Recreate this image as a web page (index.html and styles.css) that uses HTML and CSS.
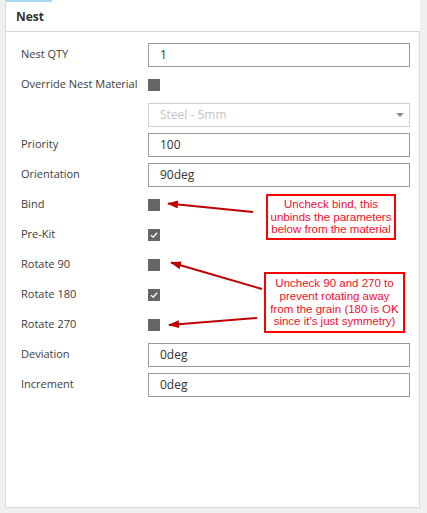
FILE: index.html
```html
<!DOCTYPE html>
<html lang="en">

<head>
  <meta charset="UTF-8" />
  <title>Nest</title>
  <link rel="stylesheet" href="styles.css">
</head>

<body>
  <div class="panel">
    <div class="panel-header">
      <div class="tab-line"></div>
      <h1>Nest</h1>
    </div>

    <div class="panel-body">
      <div class="form">
        <label>Nest QTY</label>
        <div class="field">1</div>

        <label>Override Nest Material</label>
        <div class="check"></div>

        <span></span>
        <div class="field select">Steel - 5mm<span class="caret"></span></div>

        <label>Priority</label>
        <div class="field">100</div>

        <label>Orientation</label>
        <div class="field">90deg</div>

        <label>Bind</label>
        <div class="check"></div>

        <label>Pre-Kit</label>
        <div class="check checked">
          <svg viewBox="0 0 12 12" width="12" height="12"><path d="M3 6.2 L5.2 8.2 L9.2 3.8" fill="none" stroke="#fff" stroke-width="1.3" /></svg>
        </div>

        <label>Rotate 90</label>
        <div class="check"></div>

        <label>Rotate 180</label>
        <div class="check checked">
          <svg viewBox="0 0 12 12" width="12" height="12"><path d="M3 6.2 L5.2 8.2 L9.2 3.8" fill="none" stroke="#fff" stroke-width="1.3" /></svg>
        </div>

        <label>Rotate 270</label>
        <div class="check"></div>

        <label>Deviation</label>
        <div class="field">0deg</div>

        <label>Increment</label>
        <div class="field">0deg</div>
      </div>
    </div>
  </div>

  <!-- annotations drawn over the form -->
  <svg class="arrows" width="427" height="513" viewBox="0 0 427 513">
    <defs>
      <marker id="head" markerWidth="11" markerHeight="8" refX="10" refY="4" orient="auto" markerUnits="userSpaceOnUse">
        <path d="M0 0 L11 4 L0 8 Z" fill="#c00000" />
      </marker>
    </defs>
    <line x1="253" y1="212" x2="168" y2="203.5" stroke="#c00000" stroke-width="2" marker-end="url(#head)" />
    <line x1="262" y1="289" x2="171" y2="262.5" stroke="#c00000" stroke-width="2" marker-end="url(#head)" />
    <line x1="257" y1="318" x2="169" y2="325" stroke="#c00000" stroke-width="2" marker-end="url(#head)" />
  </svg>

  <div class="callout callout-bind">Uncheck bind, this unbinds the parameters below from the material</div>
  <div class="callout callout-rotate">Uncheck 90 and 270 to prevent rotating away from the grain (180 is OK since it's just symmetry)</div>
</body>

</html>
```

FILE: styles.css
```css
* {
  box-sizing: border-box;
}

body {
  margin: 0;
  background: #f0f0f0;
  font-family: 'Open Sans', sans-serif;
  font-size: 11px;
  color: #3c3c3c;
  position: relative;
  width: 427px;
  height: 513px;
  overflow: hidden;
}

.panel {
  margin-left: 5px;
  width: 415px;
}

.panel-header {
  height: 31px;
  background: #fff;
  border-left: 1px solid #d9d9d9;
}

.tab-line {
  width: 46px;
  height: 2px;
  background: #a6d8f2;
}

h1 {
  margin: 0;
  padding: 6px 0 0 10px;
  font-size: 12px;
  font-weight: bold;
  color: #333;
}

.panel-body {
  height: 477px;
  background: #fff;
  border: 1px solid #d9d9d9;
}

.form {
  display: grid;
  grid-template-columns: 127px 262px;
  grid-auto-rows: 24px;
  row-gap: 6px;
  align-items: center;
  padding: 11px 0 0 15px;
}

.form label {
  line-height: 16px;
  margin-top: -2px;
}

.field {
  height: 24px;
  border: 1px solid #9a9a9a;
  padding: 0 0 0 11px;
  line-height: 22px;
  font-size: 12px;
  color: #333;
}

.select {
  border-color: #cfcfcf;
  color: #c4c4c4;
  position: relative;
}

.caret {
  position: absolute;
  right: 5px;
  top: 9px;
  border-left: 4px solid transparent;
  border-right: 4px solid transparent;
  border-top: 4px solid #8a8a8a;
}

.check {
  width: 12px;
  height: 12px;
  background: #666;
  margin-top: -1px;
}

.check svg {
  display: block;
}

.arrows {
  position: absolute;
  top: 0;
  left: 0;
}

.callout {
  position: absolute;
  border: 2px solid #ff0000;
  background: #fff;
  color: #f0102c;
  font-family: 'Liberation Sans', Arial, sans-serif;
  font-size: 11.5px;
  line-height: 12.7px;
  text-align: center;
  display: flex;
  align-items: center;
  justify-content: center;
  padding: 0;
}

.callout-bind {
  left: 266px;
  top: 194px;
  width: 130px;
  height: 46px;
  padding: 0 2px;
}

.callout-rotate {
  left: 264px;
  top: 272px;
  width: 141px;
  height: 61px;
  padding: 0 1px;
}
```
